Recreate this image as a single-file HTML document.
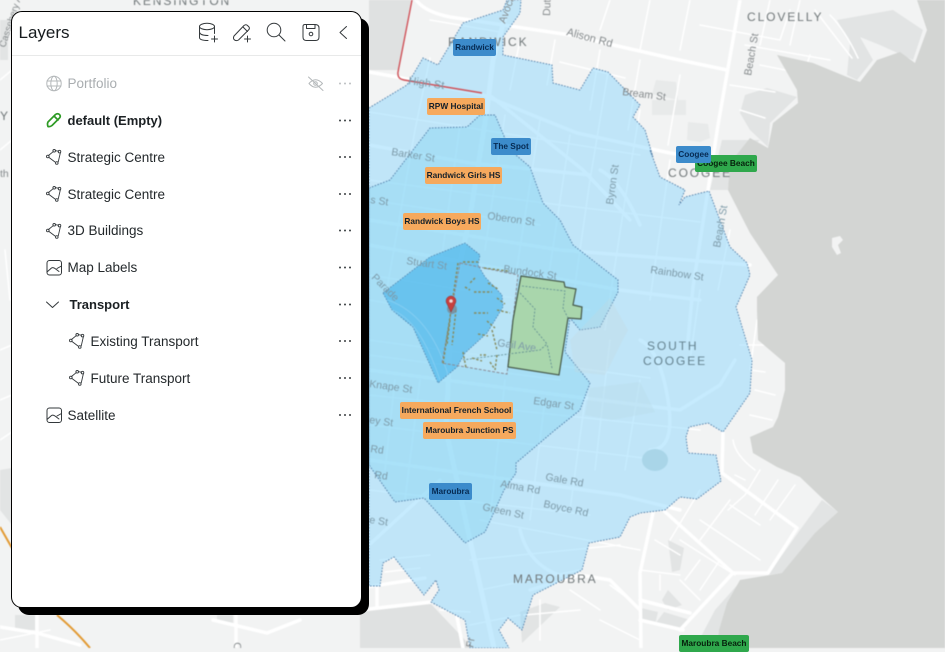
<!DOCTYPE html>
<html lang="en"><head><meta charset="utf-8"><title>Layers</title>
<style>
html,body{margin:0;padding:0;width:945px;height:648px;overflow:hidden;background:#f2f3f3;font-family:"Liberation Sans",sans-serif}
#m{position:absolute;left:0;top:0;filter:blur(.45px)}
.t{font:10.5px "Liberation Sans",sans-serif;fill:#7d9aa8}
.g{fill:#84898b}
.p{font:12px "Liberation Sans",sans-serif;letter-spacing:1.9px;fill:#6f7678}
.z{fill:#64828f}
.l{position:absolute;height:17px;line-height:16px;border-radius:2px;font:bold 8.3px/16px "Liberation Sans",sans-serif;color:#14202a;text-align:center;white-space:nowrap;overflow:hidden}
.o{background:#f6a95d}.b{background:#3c8bcb;color:#062a52}.n{background:#2fa84c;color:#06200c}
#panel{position:absolute;left:11px;top:11px;width:349px;height:595px;background:#fff;border:1.5px solid #000;border-radius:11px;box-shadow:7px 7px 0 #000}
#hd{position:absolute;left:0;top:0;right:0;height:42.5px;border-bottom:1px solid #e8e9e9}
#ti{position:absolute;left:6.5px;top:11px;font-size:17px;line-height:20px;color:#151a1d}
.r{position:absolute;left:0;height:20px;font-size:13.5px;line-height:20px;color:#24292c;white-space:nowrap}
.r.bd{font-weight:bold;font-size:13px;color:#1b2023}
.ic{position:absolute;left:0;top:0}
</style></head><body>
<svg id="m" width="945" height="648" viewBox="0 0 945 648">
<rect width="945" height="648" fill="#f2f3f3"/>
<g fill="#e2e4e4">
<path d="M369 0H411L398 70H369Z" fill="#dfe1e1"/>
<path d="M360 612L431 604L465 640L470 648H360Z" fill="#dfe1e1"/>
<path d="M837 20L893 10L923 30L913 60L880 45L860 37L873 60L857 80L847 75L850 43Z"/>
<path d="M767 88L797 97L770 123L768 147L750 130L740 113L745 95Z"/>
<path d="M722 140L760 140L730 165L728 190L710 190Z"/>
<path d="M822 500L838 512L782 573L768 575L800 530Z"/>
<path d="M740 582L727 603L719 630L717 648H695L715 610Z"/>
<path d="M656 80L676 82L678 100L652 94Z" fill="#e8eaea"/><path d="M652 100H686V115H652Z" fill="#e8eaea"/><path d="M688 122L708 124L710 138L700 142L687 140Z" fill="#e8eaea"/>
<path d="M668 540L684 548L680 570L672 572Z"/><path d="M668 590L682 605L668 610L662 600Z"/>
<path d="M664 612L690 620L680 630L655 624Z"/><path d="M641 608L658 612L655 625L640 620Z"/>
<path d="M522 643L560 607L545 603L520 612Z"/>
<path d="M0 20H8V60H0Z"/><path d="M0 470L12 468V525L0 510Z"/><path d="M15 615H35V630H15Z"/><path d="M217 615H233V623H217Z"/>
</g>
<g fill="none" stroke="#fff" stroke-linecap="round" stroke-linejoin="round">
<g stroke-width="3.500">
<path d="M416 0Q425 12 450 17L570 35L670 58L727 70"/>
<path d="M740 0L718 125L708 190L693 287L688 340"/>
<path d="M510 0L493 60L487 110L470 217L452 300L446 430L470 540L494 648" stroke-width="5"/>
<path d="M369 72L397 77L483 95L537 117L577 133L670 153L715 160"/>
<path d="M492 97L583 170L630 220"/>
<path d="M369 145L470 163L590 175"/>
<path d="M369 220L560 250L750 265"/>
<path d="M369 245L620 290L700 300"/>
<path d="M369 370L560 395L680 410L720 385L735 360"/>
<path d="M369 460L620 495L680 510"/>
<path d="M723 432L722 473L797 528L768 573L733 573L680 630"/>
<path d="M663 510L733 573"/>
<path d="M653 513L640 573L641 648"/>
<path d="M360 610L431 602"/><path d="M457 617L463 648"/>
<path d="M640 620L683 630"/><path d="M640 600L690 613"/>
<path d="M640 340Q660 350 668 400T650 450"/>
<path d="M369 545L440 480"/><path d="M360 588L425 578"/><path d="M377 588V606"/>
<path d="M530 590L580 575L610 580L640 610"/>
<path d="M520 530Q530 570 570 578"/>
<path d="M600 170Q620 180 640 225"/>
<path d="M213 620L267 633L300 620"/><path d="M236 615V648"/><path d="M0 627L37 633L80 645"/><path d="M37 615V648"/>
</g>
<g stroke-width="1.500">
<path d="M369 112L470 128L640 155M369 180L560 205L700 222M369 200L540 225M369 275L590 310M369 300L400 305M369 340L650 378M369 355L560 380M369 395L700 430M369 425L660 460M369 490L590 515M480 520L640 550M470 560L620 545M480 590L580 570"/>
<path d="M430 58L415 130L400 215L385 300M460 125L440 270M505 115L485 250M540 120L515 280M570 135L545 300M608 72L590 180L570 320M640 110L625 200L605 330M670 160L650 300M610 340L595 470M585 400L570 510M545 400L530 520M505 380L490 520M420 380L405 500M395 380L385 470M640 380L625 470M700 290L690 360M730 230L718 290"/>
<path d="M430 20L500 32M520 40L510 90M555 40L547 85M600 50L590 110M640 60L628 130M680 75L668 145M700 25L780 40L790 10M650 0L640 50M610 0L600 30M690 0L680 50M800 0L790 45M770 0L760 45M760 65L810 75M740 110L765 118M730 85L775 92M560 62L625 78M745 45L830 60M810 55L805 70M815 10Q830 30 852 58M830 15Q845 30 858 58"/>
<path d="M757 320L750 370M740 345H775M750 370L765 372M755 390L775 395M750 415L772 420M733 440Q735 455 755 470M735 475L745 480M760 470L745 495L728 510M778 480L755 515M795 485L770 520M730 505L760 525M700 490L670 540M730 500L700 540M680 540L735 575M700 520L760 560M655 540L680 555M640 570L680 575M700 560L685 580M720 560L700 590M680 580L700 600M640 575V590M660 575V590"/>
<path d="M440 610L470 612M380 560L430 555M385 572L420 568M470 625L520 615M524 615L580 610M540 600V640M570 590L600 610M600 620L640 640M610 585L630 600"/>
<path d="M0 150L12 140M0 350L12 345M0 400L12 395M0 440L12 432M0 80L12 70M5 250L10 300M0 640L50 630"/>
</g>
</g>
<path fill="#d3d5d3" d="M917 0L927 30L915 63L900 52L877 60L860 82L847 77L813 63L777 55L797 90L798 103L773 123L768 148L750 138L730 163L728 190L750 233L778 275L757 297L757 310L758 340L785 363L785 390L778 417L773 427L750 437L753 453L777 467L800 477L822 498L838 512L815 533L782 573L740 580L727 603L719 630L717 648H945V0Z"/>
<path fill="#f2f3f3" d="M832 238L840 236L843 240L838 245L841 253L837 255L832 247Z"/>
<path fill="rgba(142,215,253,.5)" stroke="#4e7ba6" stroke-width=".9" stroke-dasharray="1.6 1.4" d="M369 108L407 85L423 58L438 65L463 23L503 10L507 0H521L520 13L503 37L503 55L552 65L553 83L580 90L593 68L608 72L640 105L633 117L645 130L653 157L650 150L660 177L685 190L679 205L685 197L709 191L730 247L747 263L750 275L736 307L737 310L752 360L750 393L723 432L708 423L689 427L686 437L688 453L716 455L721 481L697 499L680 497L665 510L640 513L630 517L620 537L589 543L582 570L533 595L522 630L508 618L499 630L509 648H470L465 620L431 602L439 590L436 580L424 595L394 557L383 563L380 586H369Z"/>
<path fill="rgba(122,212,240,.36)" stroke="#4e7ba6" stroke-width=".9" stroke-dasharray="1.6 1.4" d="M369 188L390 180L403 163L430 128L467 127L480 115L495 115L510 150L530 167L543 203L560 220L573 245L618 280L618 292L600 327L580 330L570 318L565 352L590 383L580 410L555 430L516 463L516 473L504 490L485 532L465 543L424 498L395 502L369 465Z"/>
<ellipse cx="655" cy="460" rx="13" ry="11" fill="#a9d5e8"/>
<path fill="#b5d8e6" opacity=".3" d="M590 388L640 382L655 412L612 420L585 415Z"/>
<path fill="#c5d8de" opacity=".3" d="M570 340L610 298L628 330L605 375L575 372Z"/>
<path fill="rgba(255,255,255,.2)" d="M460 263L518 275L507 374L442 363Z"/>
<path fill="rgba(64,176,233,.6)" stroke="#4e7ba6" stroke-width=".7" stroke-dasharray="1.6 1.4" d="M383 293L430 257L465 243L480 255L478 265L485 277L502 295L503 307L487 333L465 353L457 367L438 383L413 327L392 310Z"/>
<g fill="none" stroke="#8ed2f3" stroke-width="1" opacity=".7"><path d="M392 310Q420 320 440 380M388 300Q430 315 448 375"/></g>
<path fill="none" stroke="#8a8c96" stroke-width="1" stroke-dasharray="3 1.500" d="M460 263L518 275L507 374L442 363Z"/>
<path fill="#a9d6ac" stroke="#465848" stroke-width="1.200" d="M521 276L564 282L565 287L576 289L573 305L582 307L581 319L568 318L559 375L508 367L513 320Z"/>
<g fill="none" stroke="#5d8a90" stroke-width=".8" stroke-dasharray="2 1.500"><path d="M522 286L565 291L563 308L568 318M520 293L535 309L533 327L547 344L540 350L462 360M552 368L547 344"/></g>
<path fill="none" stroke="#868a5c" stroke-width="1.400" stroke-dasharray="2.500 1.800" d="M458 263L443 364M463 262H478M484 268L508 271M488 283L498 289M474 292H492M497 298L505 304M465 287L470 290M474 313H488M497 310L510 313M487 321L495 328M478 334L488 336M492 330L497 350M497 355L495 370M456 310L452 345M450 320L447 345M472 358L482 361M490 362L494 368M463 352L466 368M475 278L470 283M486 355H480"/>
<circle cx="452" cy="309" r="5" fill="#7b8a95" opacity=".8"/>
<path fill="#c6403f" stroke="#8e2b2a" stroke-width=".5" d="M451 296a5 5 0 0 1 4.700 6.500Q454 306 451 312Q448 306 446.300 302.500A5 5 0 0 1 451 296Z"/><circle cx="451" cy="301" r="1.800" fill="#f0d8d8"/>
<path fill="none" stroke="#cf5158" stroke-width="1.400" d="M412 0L398 72Q397 79 404 80L482 93"/>
<path fill="none" stroke="#e29a33" stroke-width="2" d="M0 527L12 548M57 615Q75 630 90 648"/>
<g class="t">
<text class="g" transform="translate(505 24) rotate(-70)">Avoca</text>
<text class="g" transform="translate(550 16) rotate(-88)">Dutr</text>
<text class="g" transform="translate(566 35) rotate(15)" font-size="11">Alison Rd</text>
<text transform="translate(408 84) rotate(8)" font-size="11">High St</text>
<text class="g" transform="translate(622 95) rotate(7)">Bream St</text>
<text transform="translate(391 155) rotate(9)">Barker St</text>
<text transform="translate(370 203) rotate(8)">s St</text>
<text transform="translate(487 219) rotate(8)">Oberon St</text>
<text transform="translate(613 205) rotate(-82)">Byron St</text>
<text transform="translate(406 264) rotate(8)">Stuart St</text>
<text transform="translate(503 272) rotate(8)">Bundock St</text>
<text transform="translate(371 278) rotate(45)">Parade</text>
<text transform="translate(497 346) rotate(8)">Gail Ave</text>
<text transform="translate(533 404) rotate(8)">Edgar St</text>
<text transform="translate(369 387) rotate(8)">Knape St</text>
<text transform="translate(369 423) rotate(8)">ey St</text>
<text transform="translate(370 452) rotate(8)">Rd</text><text transform="translate(374 478) rotate(8)">Rd</text><text transform="translate(369 523) rotate(8)">e St</text>
<text transform="translate(500 487) rotate(10)">Alma Rd</text>
<text transform="translate(545 480) rotate(10)">Gale Rd</text>
<text transform="translate(482 510) rotate(12)">Green St</text>
<text transform="translate(543 507) rotate(12)">Boyce Rd</text>
<text transform="translate(650 273) rotate(8)">Rainbow St</text>
<text transform="translate(720 248) rotate(-80)">Beach St</text>
<text class="g" transform="translate(751 76) rotate(-80)">Beach St</text>
<text class="g" transform="translate(473 648) rotate(-80)">Fr</text>
<text class="g" transform="translate(241 650) rotate(-88)">D</text>
<text class="g" transform="translate(5 48) rotate(-72)" font-size="9.500">Cassebery Ave</text>
<text class="g" x="0" y="177">th</text>
</g>
<g class="p">
<text x="448" y="46">RANDWICK</text>
<text x="747" y="21">CLOVELLY</text>
<text x="668" y="177">COOGEE</text>
<text class="z" x="647" y="350">SOUTH</text>
<text class="z" x="643" y="365">COOGEE</text>
<text x="513" y="583">MAROUBRA</text>
<text x="133" y="5">KENSINGTON</text>
<text x="0" y="120">Y</text>
</g>
</svg>
<div class="l b" style="left:453px;top:39px;width:43px">Randwick</div>
<div class="l o" style="left:427px;top:98px;width:58px">RPW Hospital</div>
<div class="l b" style="left:491px;top:138px;width:40px">The Spot</div>
<div class="l o" style="left:425px;top:167px;width:77px">Randwick Girls HS</div>
<div class="l o" style="left:403px;top:213px;width:78px">Randwick Boys HS</div>
<div class="l o" style="left:400px;top:402px;width:113px">International French School</div>
<div class="l o" style="left:423px;top:422px;width:93px">Maroubra Junction PS</div>
<div class="l b" style="left:429px;top:483px;width:43px">Maroubra</div>
<div class="l n" style="left:695px;top:155px;width:62px">Coogee Beach</div>
<div class="l b" style="left:676px;top:146px;width:35px">Coogee</div>
<div class="l n" style="left:679px;top:635px;width:70px">Maroubra Beach</div>

<div id="panel">
<div id="hd"><div id="ti">Layers</div></div>
<svg class="ic" style="left:-1.500px;top:-1.500px" width="351" height="597" viewBox="11 11 351 597" fill="none" stroke="#33383b" stroke-width="1" stroke-linecap="round" stroke-linejoin="round">
<ellipse cx="207" cy="26.500" rx="7.500" ry="3.200"/><path d="M199.500 26.500V37.500Q199.500 40.500 208 40.500M199.500 32Q200 35.500 208 35.500M214.500 26.500V33.500"/><path d="M211.500 39H217.500M214.500 36V42"/>
<path d="M234 36L244 25.500Q246 24 247.500 25.500L249 27Q250 28.500 248.500 30L238.500 40Q236 41.500 234 39.500Q233 38 234 36Z"/><path d="M243 27L247.500 31.500"/><path d="M244.500 39H250.500M247.500 36V42"/>
<circle cx="274" cy="30" r="6.800"/><path d="M279 35L285 41"/>
<path d="M305 24.500H315Q319 24.500 319 28V37Q319 40.500 315.500 40.500H306.500Q303 40.500 303 37V26.500Q303 24.500 305 24.500Z"/><path d="M306.500 24.500V28.500H315V24.500"/><circle cx="311" cy="34" r="1.800"/>
<path d="M346.500 26.500L340 32.500L346.500 38.500"/>
<g stroke="#b4b8ba"><circle cx="54" cy="83.500" r="7.200"/><ellipse cx="54" cy="83.500" rx="3.200" ry="7.200"/><path d="M47 81H61M47 86H61"/>
<path d="M309 83.500Q315.500 76 322.500 83.500Q315.500 91 309 83.500ZM308.500 77L323 90.500"/><circle cx="315.500" cy="83.500" r="1.800"/></g>
<path stroke="#2d9a24" stroke-width="1.700" d="M48 122L55.500 114.500Q57.500 113 59.500 114.500Q61 116.500 59.500 118L52 125.500Q50 127 48 126.500Q47 124 48 122ZM54 116L58 120"/>
<g id="mesh" stroke-width=".9"><path d="M48.500 155.500L53 151.800M55.500 150.700L58.500 151.200M60.300 153L58.300 161.700M55 162L49 157.500"/><circle cx="54.200" cy="150.800" r="1.300"/><circle cx="59.500" cy="151.600" r="1.300"/><circle cx="47.800" cy="156.500" r="1.300"/><circle cx="56.800" cy="163" r="1.300"/></g>
<use href="#mesh" y="37"/><use href="#mesh" y="74"/><use href="#mesh" x="23" y="184"/><use href="#mesh" x="23" y="221"/>
<g id="imgi"><rect x="47" y="260.500" width="14.500" height="14.500" rx="2.500"/><path d="M47 272L51.500 268Q53 267 55 268.500L59 271.500M57 268.500L61.500 266"/></g>
<use href="#imgi" y="147.500"/>
<path d="M46.500 302L52.500 307.500L58.500 302"/>
</svg>
<svg class="ic" style="left:-1.500px;top:-1.500px" width="351" height="597" viewBox="11 11 351 597" fill="#3a3f42">
<g fill="#bcc0c2"><circle cx="340" cy="83.500" r="1"/><circle cx="345" cy="83.500" r="1"/><circle cx="350" cy="83.500" r="1"/></g>
<g id="d"><circle cx="340" cy="120.500" r="1"/><circle cx="345" cy="120.500" r="1"/><circle cx="350" cy="120.500" r="1"/></g>
<use href="#d" y="36.500"/><use href="#d" y="73.500"/><use href="#d" y="110"/><use href="#d" y="147"/><use href="#d" y="184"/><use href="#d" y="220.500"/><use href="#d" y="257.500"/><use href="#d" y="294.500"/>
</svg>
<div class="r" style="left:55.500px;top:62px;color:#a9adb0">Portfolio</div>
<div class="r bd" style="left:55.500px;top:98.500px">default (Empty)</div>
<div class="r" style="left:55.500px;top:135.500px">Strategic Centre</div>
<div class="r" style="left:55.500px;top:172.500px">Strategic Centre</div>
<div class="r" style="left:55.500px;top:209px">3D Buildings</div>
<div class="r" style="left:55.500px;top:246px">Map Labels</div>
<div class="r bd" style="left:57.500px;top:283px">Transport</div>
<div class="r" style="left:78.500px;top:319.500px">Existing Transport</div>
<div class="r" style="left:78.500px;top:356.500px">Future Transport</div>
<div class="r" style="left:55.500px;top:393.500px">Satellite</div>
</div>
</body></html>
